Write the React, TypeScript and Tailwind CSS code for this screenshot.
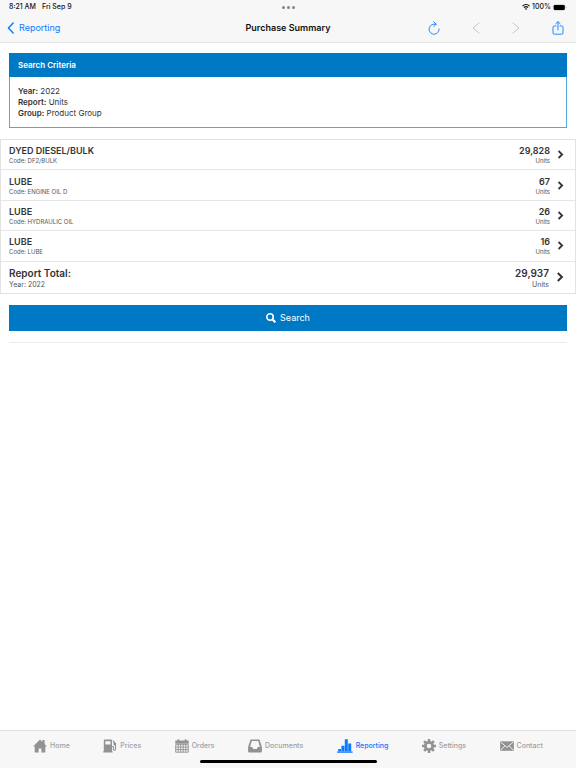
import React from "react";

type Item = { name: string; code: string; units: string };

const items: Item[] = [
  { name: "DYED DIESEL/BULK", code: "Code: DF2/BULK", units: "29,828" },
  { name: "LUBE", code: "Code: ENGINE OIL D", units: "67" },
  { name: "LUBE", code: "Code: HYDRAULIC OIL", units: "26" },
  { name: "LUBE", code: "Code: LUBE", units: "16" },
];

const criteria = [
  { label: "Year:", value: "2022" },
  { label: "Report:", value: "Units" },
  { label: "Group:", value: "Product Group" },
];

function Chevron({ large = false }: { large?: boolean }) {
  return (
    <svg viewBox="0 0 8 10" className={large ? "h-[10px] w-2" : "h-[9px] w-[7px]"} fill="none" stroke="#333" strokeWidth="2" aria-hidden="true">
      <path d="M1.8 1 L5.9 5 L1.8 9" />
    </svg>
  );
}

function StatusBar() {
  return (
    <div className="grid h-[14px] grid-cols-3 items-center px-[9px] text-[7px] leading-[14px] font-medium text-[#111]">
      <div className="flex gap-[6px]">
        <span>8:21 AM</span>
        <span>Fri Sep 9</span>
      </div>
      <div className="flex justify-center gap-[2px]">
        <span className="size-[3px] rounded-full bg-[#858585]" />
        <span className="size-[3px] rounded-full bg-[#858585]" />
        <span className="size-[3px] rounded-full bg-[#858585]" />
      </div>
      <div className="flex items-center justify-end gap-[2px]">
        <svg viewBox="0 0 16 12" className="h-[6px] w-2" fill="none" stroke="#111" strokeWidth="2.4" aria-hidden="true">
          <path d="M1 4.2 C5 .4 11 .4 15 4.2 M3.8 7.2 C6.3 5 9.7 5 12.2 7.2" />
          <path d="M8 12 L5.6 9.4 Q8 7.8 10.4 9.4Z" fill="#111" stroke="none" />
        </svg>
        <span>100%</span>
        <svg viewBox="0 0 28 13" className="h-[7px] w-[14px]" aria-hidden="true">
          <rect x=".5" y=".5" width="24" height="12" rx="3.5" fill="#bbb" />
          <rect x="1.5" y="1.5" width="22" height="10" rx="2.5" fill="#000" />
          <path d="M26 4.5 Q28 6.5 26 8.5Z" fill="#999" />
        </svg>
      </div>
    </div>
  );
}

function NavBar() {
  return (
    <div className="grid h-7 grid-cols-3 items-center px-[7px]">
      <a href="#reporting" className="flex items-center gap-1 text-[9px] leading-[14px] text-[#0a7bff]">
        <svg viewBox="0 0 8 12" className="h-3 w-2" fill="none" stroke="#0a7bff" strokeWidth="1.4" strokeLinecap="round" strokeLinejoin="round" aria-hidden="true">
          <path d="M6.2 1 L1.4 6 L6.2 11" />
        </svg>
        Reporting
      </a>
      <h1 className="text-center text-[9px] leading-[14px] font-semibold whitespace-nowrap text-[#111]">Purchase Summary</h1>
      <div className="flex items-center justify-end gap-8 pr-[5px]">
        <button type="button" aria-label="Refresh">
          <svg viewBox="0 0 12 14" className="h-[14px] w-3" fill="none" stroke="#2489ff" strokeWidth="1" strokeLinecap="round" strokeLinejoin="round">
            <path d="M8 3.2 H6 A5 5 0 1 0 11.1 8" />
            <path d="M5.8 .8 L8.2 3.2 L5.8 5.6" />
          </svg>
        </button>
        <button type="button" aria-label="Back" disabled>
          <svg viewBox="0 0 8 12" className="h-3 w-2" fill="none" stroke="#c4c4c6" strokeWidth="1" strokeLinecap="round" strokeLinejoin="round">
            <path d="M7 1 L1 6 L7 11" />
          </svg>
        </button>
        <button type="button" aria-label="Forward" disabled>
          <svg viewBox="0 0 8 12" className="h-3 w-2" fill="none" stroke="#c4c4c6" strokeWidth="1" strokeLinecap="round" strokeLinejoin="round">
            <path d="M1 1 L7 6 L1 11" />
          </svg>
        </button>
        <button type="button" aria-label="Share">
          <svg viewBox="0 0 12 14" className="h-[14px] w-3" fill="none" stroke="#2489ff" strokeWidth="1" strokeLinecap="round" strokeLinejoin="round">
            <path d="M4 5 H2.2 Q1 5 1 6.2 V12 Q1 13.2 2.2 13.2 H9.8 Q11 13.2 11 12 V6.2 Q11 5 9.8 5 H8" />
            <path d="M6 9 V.8 M3.8 2.8 L6 .7 L8.2 2.8" />
          </svg>
        </button>
      </div>
    </div>
  );
}

const tabs: { label: string; active?: boolean; icon: React.ReactNode }[] = [
  {
    label: "Home",
    icon: <path d="M7 .5 L9.4 2.9 V1 H11.6 V5.1 L13.9 7.4 H12.3 V13.5 H8.4 V9.5 H5.6 V13.5 H1.7 V7.4 H.1Z" fill="currentColor" />,
  },
  {
    label: "Prices",
    icon: (
      <>
        <path fillRule="evenodd" d="M1.6 .6 H8 Q9 .6 9 1.6 V12.2 H9.6 V13.6 H.2 V12.2 H.8 V1.6 Q.8 .6 1.6 .6Z M2.3 2.2 V5.4 H7.5 V2.2Z" fill="currentColor" />
        <path d="M9 7.5 H9.8 Q10.4 7.5 10.4 8.4 V10.2 Q10.4 11.3 11.4 11.3 Q12.5 11.3 12.5 10.2 V4.4 L9.8 1.6" fill="none" stroke="currentColor" strokeWidth="1.1" />
        <path d="M10.4 3 L12.9 4.6 V6.6 H11.4 L10.4 5.6Z" fill="currentColor" />
      </>
    ),
  },
  {
    label: "Orders",
    icon: (
      <>
        <path d="M.3 1.4 H13.7 V4.8 H.3Z M2.6 .2 H4.2 V2.6 H2.6Z M9.8 .2 H11.4 V2.6 H9.8Z" fill="currentColor" />
        <path d="M.7 5.6 H13.3 V13.2 H.7Z M.7 8.1 H13.3 M.7 10.6 H13.3 M3.2 5.4 V13.2 M5.7 5.4 V13.2 M8.2 5.4 V13.2 M10.8 5.4 V13.2" fill="none" stroke="currentColor" strokeWidth=".9" />
      </>
    ),
  },
  {
    label: "Documents",
    icon: <path fillRule="evenodd" d="M2.5 .4 H11.5 L13.9 8 V12.6 Q13.9 13.6 12.9 13.6 H1.1 Q.1 13.6 .1 12.6 V8Z M3.8 2 L2.1 8 H4.3 L5.2 10 H8.8 L9.7 8 H11.9 L10.2 2Z" fill="currentColor" />,
  },
  {
    label: "Reporting",
    active: true,
    icon: <path d="M0 12.6 H15.6 V13.7 H0Z M1.2 10 H4 V12.2 H1.2Z M4.4 6.8 H7.4 V12.2 H4.4Z M7.8 .2 H10.8 V12.2 H7.8Z M11.2 4.4 H14.2 V12.2 H11.2Z" fill="currentColor" />,
  },
  {
    label: "Settings",
    icon: (
      <>
        <circle cx="7" cy="7" r="3.7" fill="none" stroke="currentColor" strokeWidth="2.8" />
        <path d="M7 0 V3 M7 11 V14 M0 7 H3 M11 7 H14 M2.1 2.1 L4 4 M10 10 L11.9 11.9 M11.9 2.1 L10 4 M4 10 L2.1 11.9" stroke="currentColor" strokeWidth="2.5" />
      </>
    ),
  },
  {
    label: "Contact",
    icon: (
      <>
        <path d="M.1 2.3 H13.9 V11.8 H.1Z" fill="currentColor" />
        <path d="M.6 3 L7 8.4 L13.4 3 M.6 11.3 L4.9 6.8 M13.4 11.3 L9.1 6.8" fill="none" stroke="#f7f7f7" strokeWidth=".9" />
      </>
    ),
  },
];

function TabBar() {
  return (
    <footer className="border-t border-[#e0e0e0] bg-[#f7f7f7]">
      <nav className="flex h-[29px] items-center justify-between px-[33px]">
        {tabs.map((tab) => (
          <a
            key={tab.label}
            href={"#" + tab.label.toLowerCase()}
            className={"flex items-center gap-[3px] text-[7px] leading-[14px] font-medium " + (tab.active ? "text-[#0a7bff]" : "text-[#929292]")}
          >
            <svg viewBox={tab.active ? "0 0 16 14" : "0 0 14 14"} className={tab.active ? "h-[14px] w-4" : "size-[14px]"} aria-hidden="true">
              {tab.icon}
            </svg>
            <span className={tab.active ? "" : "text-[#a0a0a0]"}>{tab.label}</span>
          </a>
        ))}
      </nav>
      <div className="flex h-2 justify-center">
        <span className="h-[3px] w-[177px] rounded-full bg-black" />
      </div>
    </footer>
  );
}

export default function App() {
  return (
    <div className="flex min-h-screen flex-col bg-white font-['Inter','Liberation_Sans',sans-serif] text-[#333]">
      <header className="border-b border-[#e6e6e6] bg-[#f7f7f7]">
        <StatusBar />
        <NavBar />
      </header>

      <main className="flex-1 pt-[10px]">
        <section className="mx-[9px] border border-t-0 border-[#55a8db]">
          <h2 className="-mx-px bg-[#0079c4] px-[9px] py-1 text-[8px] leading-4 font-semibold text-white">Search Criteria</h2>
          <div className="px-2 pt-[9px] pb-2 text-[8px] leading-[11px]">
            {criteria.map((c) => (
              <p key={c.label}>
                <strong className="font-semibold">{c.label}</strong> {c.value}
              </p>
            ))}
          </div>
        </section>

        <ul className="mt-[11px] flex min-h-[155px] flex-col border border-[#e2e2e2]">
          {items.map((item, i) => (
            <li key={i} className="flex grow flex-col justify-center border-b border-[#e6e6e6]">
              <a href="#item" className="flex items-center justify-between py-1 pr-[11px] pl-2">
                <div>
                  <p className="text-[9px] leading-[13px] font-semibold">{item.name}</p>
                  <p className="text-[6px] leading-[8px] text-[#555]">{item.code}</p>
                </div>
                <div className="flex items-center gap-[7px]">
                  <div className="text-right">
                    <p className="text-[9px] leading-[13px] font-semibold">{item.units}</p>
                    <p className="text-[6px] leading-[8px] text-[#555]">Units</p>
                  </div>
                  <Chevron />
                </div>
              </a>
            </li>
          ))}
          <li className="flex grow flex-col justify-center">
            <a href="#total" className="flex items-center justify-between py-1 pr-[11px] pl-2">
              <div>
                <p className="text-[10px] leading-[14px] font-semibold">Report Total:</p>
                <p className="text-[7px] leading-[9px] text-[#555]">Year: 2022</p>
              </div>
              <div className="flex items-center gap-[7px]">
                <div className="text-right">
                  <p className="text-[10px] leading-[14px] font-semibold">29,937</p>
                  <p className="text-[7px] leading-[9px] text-[#555]">Units</p>
                </div>
                <Chevron large />
              </div>
            </a>
          </li>
        </ul>

        <div className="mx-[9px] mt-[11px] border-b border-[#ececec] pb-[11px]">
          <button type="button" className="flex h-[26px] w-full items-center justify-center gap-1 bg-[#0079c4] text-[9px] leading-[14px] text-white">
            <svg viewBox="0 0 10 10" className="size-[10px]" fill="none" stroke="white" aria-hidden="true">
              <circle cx="4" cy="4" r="3.2" strokeWidth="1.6" />
              <path d="M6.3 6.3 L9.4 9.4" strokeWidth="2" />
            </svg>
            Search
          </button>
        </div>
      </main>

      <TabBar />
    </div>
  );
}
